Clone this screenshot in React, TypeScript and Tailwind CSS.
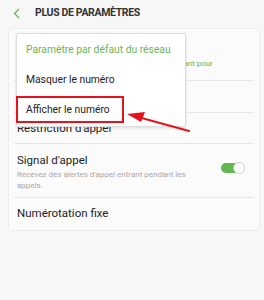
import { ReactNode } from 'react';

const Row = ({ children, className = '' }: { children: ReactNode; className?: string }) => (
  <div className={`flex items-center border-b border-[#e6e6e6] mx-[5px] px-[3px] ${className}`}>
    {children}
  </div>
);

const App = () => {
  return (
    <div className="relative w-[264px] h-[300px] overflow-hidden bg-[#f7f7f7] font-['Roboto',sans-serif]">
      {/* Header */}
      <div className="flex items-center h-[28px] pl-[13px] gap-[14px]">
        <svg width="8" height="11" viewBox="0 0 8 11" className="mt-[-1px]">
          <polyline points="6,1 1.5,5.5 6,10" fill="none" stroke="#6ab558" strokeWidth="1.3" />
        </svg>
        <span className="text-[10.5px] font-bold text-[#333] tracking-[-0.35px] mt-[-2px]">
          PLUS DE PARAMÈTRES
        </span>
      </div>

      {/* Settings card */}
      <div className="mx-[8px] w-[252px] bg-[#fbfbfb] border border-[#ececec] rounded-[3px]">
        <Row className="h-[52px]">
          <div className="flex flex-col">
            <span className="text-[11.5px] text-[#222]">Afficher votre numéro</span>
            <span className="text-[8px] text-[#6ab558] mt-[2px] whitespace-nowrap tracking-[-0.1px]">
              Paramètre de l'opérateur, choisir le mode d'appelant pour
            </span>
          </div>
        </Row>
        <Row className="h-[32px]">
          <span className="text-[11.5px] text-[#222]">Mise en attente</span>
        </Row>
        <Row className="h-[31px]">
          <span className="text-[11.5px] text-[#222] mt-[1px]">Restriction d'appel</span>
        </Row>
        <Row className="h-[54px] justify-between">
          <div className="flex flex-col w-[190px] mt-[2px]">
            <span className="text-[11.5px] text-[#222] leading-[15px]">Signal d'appel</span>
            <span className="text-[8px] text-[#a8a8a8] leading-[11px] mt-[1px]">
              Recevez des alertes d'appel entrant pendant les appels.
            </span>
          </div>
          <div className="relative w-[24px] h-[12px] mr-[6px] mt-[-6px]">
            <div className="absolute left-0 top-[1px] w-[22px] h-[10px] rounded-full bg-[#62b74f]" />
            <div className="absolute right-0 top-0 w-[12px] h-[12px] rounded-full bg-white border border-[#cfcfcf]" />
          </div>
        </Row>
        <Row className="h-[32px] border-b-0">
          <span className="text-[11.5px] text-[#222]">Numérotation fixe</span>
        </Row>
      </div>

      {/* Popup menu */}
      <div className="absolute left-[16px] top-[33px] w-[170px] py-[1px] bg-white border border-[#dcdcdc] rounded-[2px] shadow-[0_1px_3px_rgba(0,0,0,0.12)]">
        <div className="h-[30px] flex items-center pl-[9px] text-[10.3px] text-[#6ab558]">
          Paramètre par défaut du réseau
        </div>
        <div className="h-[30px] flex items-center pl-[9px] text-[10.3px] text-[#222]">
          Masquer le numéro
        </div>
        <div className="h-[30px] flex items-center pl-[9px] text-[10.3px] text-[#222]">
          Afficher le numéro
        </div>
      </div>

      {/* Red highlight */}
      <div className="absolute left-[16px] top-[96px] w-[108px] h-[27px] border-2 border-[#e3141c]" />

      {/* Red arrow */}
      <svg className="absolute left-0 top-0" width="264" height="300" viewBox="0 0 264 300">
        <line x1="189" y1="131" x2="138" y2="117" stroke="#e3141c" strokeWidth="2.2" strokeLinecap="round" />
        <polygon points="127,114 145,112 141,122" fill="#e3141c" />
      </svg>
    </div>
  );
};

export default App;
